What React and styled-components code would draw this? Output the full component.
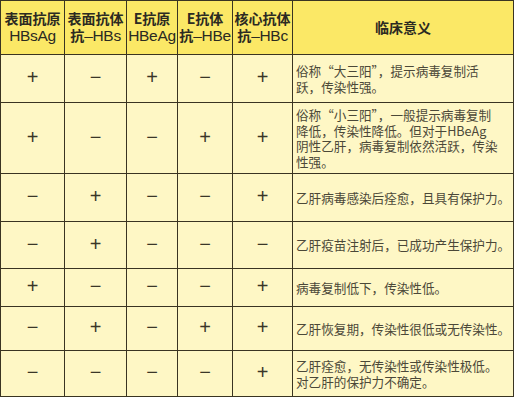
import React from 'react'
import styled, { createGlobalStyle } from 'styled-components'

const GlobalStyle = createGlobalStyle`
    html, body {
        margin: 0;
        padding: 0;
        background: #ffffff;
    }
`

const Table = styled.table`
    border-collapse: collapse;
    table-layout: fixed;
    width: 513px;
    margin: 0;
    font-family: "Noto Sans CJK SC", "Liberation Sans", sans-serif;
`

const HeadCell = styled.th`
    background: #fbe866;
    border: 1.5px solid #3a3422;
    height: 53px;
    padding: 0;
    color: #2b2a22;
    text-align: center;
    vertical-align: middle;
    font-weight: 700;
    font-size: 14px;
    line-height: 17px;
    white-space: nowrap;
`

const SubLine = styled.span`
    display: block;
`

const Latin = styled.span`
    font-family: "Liberation Sans", sans-serif;
    font-weight: 400;
    font-size: 15.5px;
    line-height: 18px;
    letter-spacing: -0.3px;
`

const Row = styled.tr`
    height: ${(p) => p.$h}px;
`

const Sign = styled.td`
    background: #fef7c5;
    border: 1.5px solid #3a3422;
    padding: 0 0 2px;
    text-align: center;
    vertical-align: middle;
    color: #3a3628;
    font-family: "Liberation Sans", sans-serif;
    font-weight: 400;
    font-size: 20px;
`

const Note = styled.td`
    background: #fef7c5;
    border: 1.5px solid #3a3422;
    padding: 0 0 0 3px;
    vertical-align: middle;
    color: #4b4838;
    font-size: 12.6px;
    line-height: 15.5px;
    white-space: nowrap;
    overflow: hidden;
`

const widths = [64, 62, 51, 55, 60, 221]

const heads = [
    ['表面抗原', '', 'HBsAg'],
    ['表面抗体', '抗', '–HBs'],
    ['E抗原', '', 'HBeAg'],
    ['E抗体', '抗', '–HBe'],
    ['核心抗体', '抗', '–HBc'],
]

const rows = [
    { h: 48, s: '+−+−+', t: ['俗称“大三阳”，提示病毒复制活', '跃，传染性强。'] },
    { h: 71, s: '+−−++', t: ['俗称“小三阳”，一般提示病毒复制', '降低，传染性降低。但对于HBeAg', '阴性乙肝，病毒复制依然活跃，传染', '性强。'] },
    { h: 48, s: '−+−−+', t: ['乙肝病毒感染后痊愈，且具有保护力。'] },
    { h: 47, s: '−+−−−', t: ['乙肝疫苗注射后，已成功产生保护力。'] },
    { h: 38, s: '+−−−+', t: ['病毒复制低下，传染性低。'] },
    { h: 44, s: '−+−++', t: ['乙肝恢复期，传染性很低或无传染性。'] },
    { h: 46, s: '−−−−+', t: ['乙肝痊愈，无传染性或传染性极低。', '对乙肝的保护力不确定。'] },
]

export default function App() {
    return (
        <React.Fragment>
            <GlobalStyle />
            <Table>
                <colgroup>
                    {widths.map((w, i) => (
                        <col key={i} style={{ width: w }} />
                    ))}
                </colgroup>
                <thead>
                    <tr>
                        {heads.map(([a, cjk, lat]) => (
                            <HeadCell key={a}>
                                {a}
                                <SubLine>
                                    {cjk}
                                    <Latin>{lat}</Latin>
                                </SubLine>
                            </HeadCell>
                        ))}
                        <HeadCell>临床意义</HeadCell>
                    </tr>
                </thead>
                <tbody>
                    {rows.map((r, i) => (
                        <Row key={i} $h={r.h}>
                            {r.s.split('').map((c, j) => (
                                <Sign key={j}>{c}</Sign>
                            ))}
                            <Note>
                                {r.t.map((line, k) => (
                                    <React.Fragment key={k}>
                                        {k > 0 && <br />}
                                        {line}
                                    </React.Fragment>
                                ))}
                            </Note>
                        </Row>
                    ))}
                </tbody>
            </Table>
        </React.Fragment>
    )
}
